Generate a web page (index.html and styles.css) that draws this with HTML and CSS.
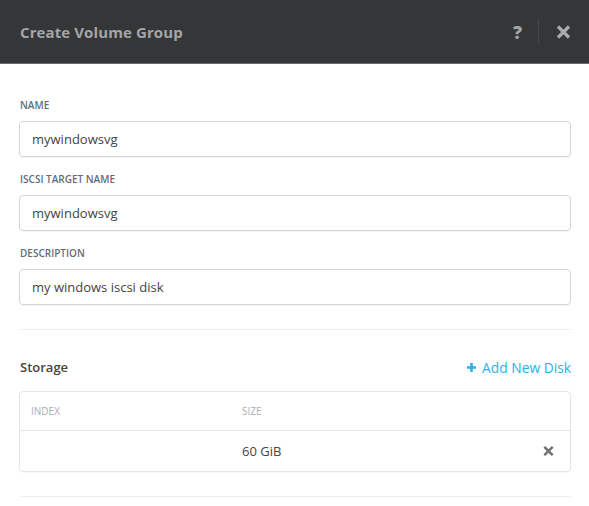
FILE: index.html
```html
<!DOCTYPE html>
<html lang="en">
<head>
<meta charset="utf-8">
<title>Create Volume Group</title>
<link rel="stylesheet" href="styles.css">
</head>
<body>
<div class="modal">
  <header class="modal-header">
    <h1 class="modal-title">Create Volume Group</h1>
    <div class="header-actions">
      <span class="help">?</span>
      <span class="sep"></span>
      <svg class="close" width="15" height="14" viewBox="0 0 15 14"><path d="M2 1.5 L13 12.5 M13 1.5 L2 12.5" stroke="currentColor" stroke-width="3.2" stroke-linecap="butt"/></svg>
    </div>
  </header>
  <main class="modal-body">
    <div class="field">
      <label class="field-label">Name</label>
      <div class="input">mywindowsvg</div>
    </div>
    <div class="field">
      <label class="field-label">iSCSI Target Name</label>
      <div class="input">mywindowsvg</div>
    </div>
    <div class="field">
      <label class="field-label">Description</label>
      <div class="input">my windows iscsi disk</div>
    </div>
    <hr class="divider">
    <div class="section-head">
      <span class="section-title">Storage</span>
      <span class="add-link"><svg class="plus" width="9" height="9" viewBox="0 0 9 9"><path d="M4.5 0 V9 M0 4.5 H9" stroke="currentColor" stroke-width="2.6"/></svg>Add New Disk</span>
    </div>
    <div class="table">
      <div class="row head">
        <div class="col-index">Index</div>
        <div class="col-size">Size</div>
        <div class="col-act"></div>
      </div>
      <div class="row">
        <div class="col-index"></div>
        <div class="col-size">60 GiB</div>
        <div class="col-act"><svg width="11" height="10" viewBox="0 0 11 10"><path d="M1.3 0.8 L9.7 9.2 M9.7 0.8 L1.3 9.2" stroke="currentColor" stroke-width="2.4"/></svg></div>
      </div>
    </div>
    <hr class="divider bottom">
  </main>
</div>
</body>
</html>
```
FILE: styles.css
```css
html, body {
  margin: 0;
  padding: 0;
  background: #ffffff;
}
body {
  font-family: "Open Sans", Lato, "Liberation Sans", sans-serif;
  color: #333;
  width: 589px;
}
.modal-header {
  height: 64px;
  background: #353638;
  border-bottom: 1px solid #6a6b6d;
  box-sizing: border-box;
  display: flex;
  align-items: center;
  justify-content: space-between;
  padding: 0 18px 0 20px;
}
.modal-title {
  margin: 0;
  font-size: 15px;
  font-weight: 700;
  color: #a3a5a8;
  letter-spacing: 0.1px;
}
.header-actions {
  display: flex;
  align-items: center;
}
.help {
  font-size: 18px;
  font-weight: 800;
  color: #a3a5a8;
  line-height: 1;
  margin-right: 16px;
}
.sep {
  width: 1px;
  height: 25px;
  background: #45464a;
  margin-right: 17px;
}
.close {
  color: #a9abae;
  display: block;
}
.modal-body {
  padding: 35px 18px 0 19px;
}
.field {
  margin-bottom: 16px;
}
.field-label {
  display: block;
  font-size: 10px;
  line-height: 12px;
  font-weight: 600;
  text-transform: uppercase;
  color: #646c77;
  margin: 0 0 10px 1px;
}
.input {
  height: 36px;
  box-sizing: border-box;
  border: 1px solid #d3d5d8;
  border-radius: 4px;
  box-shadow: 0 1px 1px rgba(0,0,0,0.04);
  font-size: 13px;
  line-height: 34px;
  padding: 0 12px;
  color: #444;
}
.divider {
  border: 0;
  border-top: 1px solid #eceef0;
  margin: 24px 0 0 1px;
}
.section-head {
  display: flex;
  justify-content: space-between;
  align-items: center;
  margin-top: 29px;
  height: 16px;
  margin-bottom: 16px;
}
.section-title {
  font-size: 13px;
  font-weight: 600;
  color: #434548;
  padding-left: 1px;
}
.add-link {
  font-size: 13.8px;
  color: #2bb2ea;
  display: flex;
  align-items: center;
}
.plus {
  margin-right: 6px;
}
.table {
  border: 1px solid #e3e5e8;
  border-radius: 4px;
  box-shadow: 0 1px 1px rgba(0,0,0,0.03);
}
.row {
  display: flex;
  align-items: center;
  height: 40px;
}
.row.head {
  height: 38px;
  border-bottom: 1px solid #e3e5e8;
  font-size: 10px;
  text-transform: uppercase;
  color: #a9aeb5;
}
.col-index {
  width: 211px;
  padding-left: 11px;
}
.col-size {
  flex: 1;
}
.row:not(.head) .col-size {
  font-size: 13px;
  color: #444;
}
.col-act {
  width: 27px;
  color: #6f7175;
  display: flex;
  align-items: center;
}
.divider.bottom {
  margin-top: 24px;
}
```
